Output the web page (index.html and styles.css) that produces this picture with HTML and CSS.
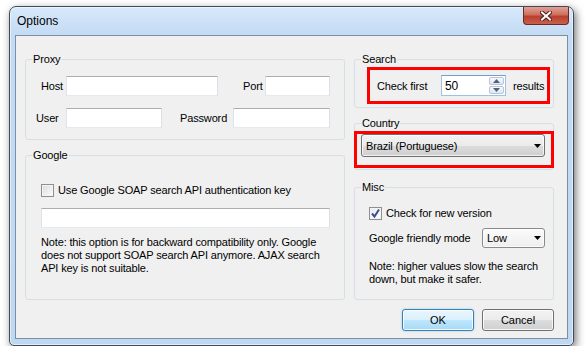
FILE: index.html
```html
<!DOCTYPE html>
<html lang="en">
<head>
  <meta charset="UTF-8">
  <title>Options</title>
  <link rel="stylesheet" href="styles.css">
</head>
<body>

  <div class="window">
    <div class="titlebar">
      <span class="title">Options</span>
      <div class="close-btn">
        <svg width="12" height="10" viewBox="0 0 12 10">
          <path d="M2 1.5 L10 8.5 M10 1.5 L2 8.5" stroke="#4a2020" stroke-width="4" stroke-linecap="square"/>
          <path d="M2 1.5 L10 8.5 M10 1.5 L2 8.5" stroke="#ffffff" stroke-width="2" stroke-linecap="square"/>
        </svg>
      </div>
    </div>

    <div class="client">
      <div class="columns">
        <div class="col-left">

          <fieldset class="group proxy">
            <legend>Proxy</legend>
            <div class="group-body">
              <div class="row">
                <span class="lbl lbl-host">Host</span>
                <span class="textbox tb-host"></span>
                <span class="lbl lbl-port">Port</span>
                <span class="textbox tb-port"></span>
              </div>
              <div class="row">
                <span class="lbl lbl-user">User</span>
                <span class="textbox tb-user"></span>
                <span class="lbl lbl-pass">Password</span>
                <span class="textbox tb-pass"></span>
              </div>
            </div>
          </fieldset>

          <fieldset class="group google">
            <legend>Google</legend>
            <div class="group-body">
              <div class="check-row">
                <span class="checkbox"></span>
                <span>Use Google SOAP search API authentication key</span>
              </div>
              <span class="textbox tb-key"></span>
              <p class="note">Note: this option is for backward compatibility only. Google<br>does not support SOAP search API anymore. AJAX search<br>API key is not suitable.</p>
            </div>
          </fieldset>

        </div>

        <div class="col-right">

          <fieldset class="group search">
            <legend>Search</legend>
            <div class="highlight search-hl">
              <span class="lbl-check">Check first</span>
              <div class="spin">
                <span class="spin-value">50</span>
                <div class="spin-buttons">
                  <span class="spin-btn"><svg width="7" height="4" viewBox="0 0 7 4"><path d="M0 4 L3.5 0 L7 4 Z" fill="#4d6185"/></svg></span>
                  <span class="spin-btn"><svg width="7" height="4" viewBox="0 0 7 4"><path d="M0 0 L7 0 L3.5 4 Z" fill="#4d6185"/></svg></span>
                </div>
              </div>
              <span class="lbl-results">results</span>
            </div>
          </fieldset>

          <fieldset class="group country">
            <legend>Country</legend>
            <div class="highlight country-hl">
              <div class="combo combo-country">
                <span>Brazil (Portuguese)</span>
                <svg width="7" height="4" viewBox="0 0 7 4"><path d="M0 0 L7 0 L3.5 4 Z" fill="#000"/></svg>
              </div>
            </div>
          </fieldset>

          <fieldset class="group misc">
            <legend>Misc</legend>
            <div class="group-body">
              <div class="check-row">
                <span class="checkbox checked">
                  <svg width="11" height="11" viewBox="0 0 11 11"><path d="M2 5.5 L4.5 8.5 L9 1.5" fill="none" stroke="#3c4f8c" stroke-width="2"/></svg>
                </span>
                <span>Check for new version</span>
              </div>
              <div class="mode-row">
                <span>Google friendly mode</span>
                <div class="combo combo-mode">
                  <span>Low</span>
                  <svg width="7" height="4" viewBox="0 0 7 4"><path d="M0 0 L7 0 L3.5 4 Z" fill="#000"/></svg>
                </div>
              </div>
              <p class="note">Note: higher values slow the search<br>down, but make it safer.</p>
            </div>
          </fieldset>

        </div>
      </div>

      <div class="button-row">
        <button class="button button-default">OK</button>
        <button class="button">Cancel</button>
      </div>
    </div>
  </div>

</body>
</html>
```

FILE: styles.css
```css
:root {
  --client-bg: #f0f0f0;
  --group-border: #d5dfe5;
  --highlight: #ff0000;
  --ui-font: "Liberation Sans", Arial, sans-serif;
}

body {
  margin: 0;
  background: #ffffff;
  font-family: var(--ui-font);
  font-size: 11px;
  letter-spacing: -0.15px;
  color: #000;
}

/* window frame */
.window {
  width: 565px;
  height: 340px;
  margin: 6px 0 0 9px;
  box-sizing: border-box;
  border: 1px solid #414b58;
  border-radius: 7px 7px 5px 5px;
  background: linear-gradient(to bottom, #d7e8fa 0px, #c3dbf4 28px, #bfd8f2 100%);
  box-shadow: 2px 3px 9px rgba(0, 0, 0, 0.55), inset 0 0 0 1px rgba(255, 255, 255, 0.55);
  display: flex;
  flex-direction: column;
}

.titlebar {
  height: 28px;
  display: flex;
  align-items: flex-start;
  padding: 0 4px 0 7px;
}

.title {
  font-size: 12px;
  line-height: 28px;
  letter-spacing: 0;
  color: #000;
}

.close-btn {
  margin-left: auto;
  width: 46px;
  height: 18px;
  box-sizing: border-box;
  border: 1px solid #6b2a24;
  border-top: none;
  border-radius: 0 0 4px 4px;
  background: linear-gradient(to bottom, #e0a194 0%, #cf705f 45%, #b9402d 55%, #c9604c 100%);
  display: flex;
  justify-content: center;
  align-items: center;
}

.client {
  flex: 1;
  margin: 0 5px 6px;
  background: var(--client-bg);
  border: 1px solid #7d8fa5;
  padding: 17px 13px 7px 9px;
  display: flex;
  flex-direction: column;
}

.columns {
  display: flex;
  gap: 9px;
  height: 247px;
}

.col-left {
  width: 320px;
  display: flex;
  flex-direction: column;
  gap: 9px;
}

.col-right {
  width: 200px;
  display: flex;
  flex-direction: column;
}

/* group boxes */
.group {
  margin: 0;
  padding: 0;
  border: 1px solid var(--group-border);
  border-radius: 3px;
  min-width: 0;
}

.group legend {
  padding: 0 1px;
  margin-left: 6px;
  line-height: 13px;
}

.proxy .group-body {
  padding: 10px 13px 11px 10px;
  display: flex;
  flex-direction: column;
  gap: 12px;
}

.google {
  flex: 1;
}

.google .group-body {
  padding: 22px 13px 0 15px;
  display: flex;
  flex-direction: column;
}

.row {
  display: flex;
  align-items: center;
  height: 20px;
}

.lbl {
  line-height: 13px;
}

.lbl-host { width: 25px; padding-left: 5px; }
.lbl-user { width: 30px; }
.lbl-port { width: 22px; margin-left: 25px; }
.lbl-pass { width: 53px; margin-left: 18px; }

.textbox {
  display: block;
  height: 20px;
  box-sizing: border-box;
  background: #fff;
  border: 1px solid;
  border-color: #abadb3 #dbdfe6 #e3e9ef #e2e3ea;
}

.tb-host { width: 152px; }
.tb-port { width: 65px; }
.tb-user { width: 96px; }
.tb-pass { width: 97px; }
.tb-key { width: 289px; margin-top: 11px; }

.check-row {
  display: flex;
  align-items: center;
  gap: 4px;
  height: 13px;
  line-height: 13px;
}

.checkbox {
  width: 13px;
  height: 13px;
  box-sizing: border-box;
  border: 1px solid #8e8f8f;
  background: linear-gradient(135deg, #dcdcdc, #fbfbfb);
  box-shadow: inset 0 0 0 1px #f4f4f4;
  display: flex;
  justify-content: center;
  align-items: center;
}

.checkbox.checked {
  background: linear-gradient(135deg, #e6e9ee, #ffffff);
}

.note {
  margin: 8px 0 0;
  line-height: 13px;
}

/* red highlight frames */
.highlight {
  box-sizing: border-box;
  height: 37px;
  border: 3px solid var(--highlight);
  display: flex;
  align-items: center;
}

.search-hl {
  margin: 1px 3px 3px 12px;
  padding-left: 7px;
}

.country-hl {
  margin: 1px -1px 1px;
  padding: 0 6px 8px 4px;
  align-items: flex-start;
}

.lbl-check {
  width: 64px;
}

.lbl-results {
  margin-left: 7px;
}

.spin {
  width: 65px;
  height: 21px;
  box-sizing: border-box;
  background: #fff;
  border: 1px solid #9ec0e2;
  border-top-color: #6f9fd0;
  display: flex;
  align-items: center;
  padding: 1px 1px 1px 3px;
}

.spin-value {
  flex: 1;
  font-size: 12px;
}

.spin-buttons {
  width: 15px;
  display: flex;
  flex-direction: column;
  gap: 1px;
}

.spin-btn {
  height: 8px;
  box-sizing: border-box;
  border: 1px solid #b9c5d6;
  border-radius: 2px;
  background: linear-gradient(to bottom, #f6f8fb, #e1e7ef);
  display: flex;
  justify-content: center;
  align-items: center;
}

/* combo boxes */
.combo {
  box-sizing: border-box;
  border: 1px solid #707070;
  border-radius: 3px;
  background: linear-gradient(to bottom, #f2f2f2 0%, #ebebeb 50%, #dddddd 51%, #cfcfcf 100%);
  box-shadow: inset 0 0 0 1px rgba(255, 255, 255, 0.7);
  display: flex;
  align-items: center;
  justify-content: space-between;
  padding: 0 3px 0 4px;
}

.combo-country {
  width: 184px;
  height: 23px;
}

.combo-mode {
  width: 63px;
  height: 20px;
  border-color: #8a8a8a;
  background: linear-gradient(to bottom, #fbfbfb, #eeeeee);
}

.misc {
  margin-top: 11px;
  flex: 1;
}

.misc .group-body {
  padding: 13px 8px 0 14px;
  display: flex;
  flex-direction: column;
}

.mode-row {
  margin-top: 8px;
  display: flex;
  align-items: center;
  justify-content: space-between;
  height: 20px;
}

.misc .note {
  margin-top: 12px;
}

.country {
  margin-top: 9px;
}

/* dialog buttons */
.button-row {
  margin-top: 9px;
  display: flex;
  justify-content: flex-end;
  gap: 8px;
}

.button {
  width: 72px;
  height: 22px;
  border: 1px solid #707070;
  border-radius: 3px;
  background: linear-gradient(to bottom, #f2f2f2 0%, #ebebeb 50%, #dddddd 51%, #cfcfcf 100%);
  box-shadow: inset 0 0 0 1px rgba(255, 255, 255, 0.8);
  font-family: var(--ui-font);
  font-size: 11px;
  color: #000;
  padding: 0;
}

.button-default {
  border-color: #3c7fb1;
  background: linear-gradient(to bottom, #eaf6fd 0%, #d9f0fc 50%, #bee6fd 51%, #a7d9f5 100%);
  box-shadow: inset 0 0 0 1px rgba(255, 255, 255, 0.8), 0 0 2px #73c4f0;
}
```
